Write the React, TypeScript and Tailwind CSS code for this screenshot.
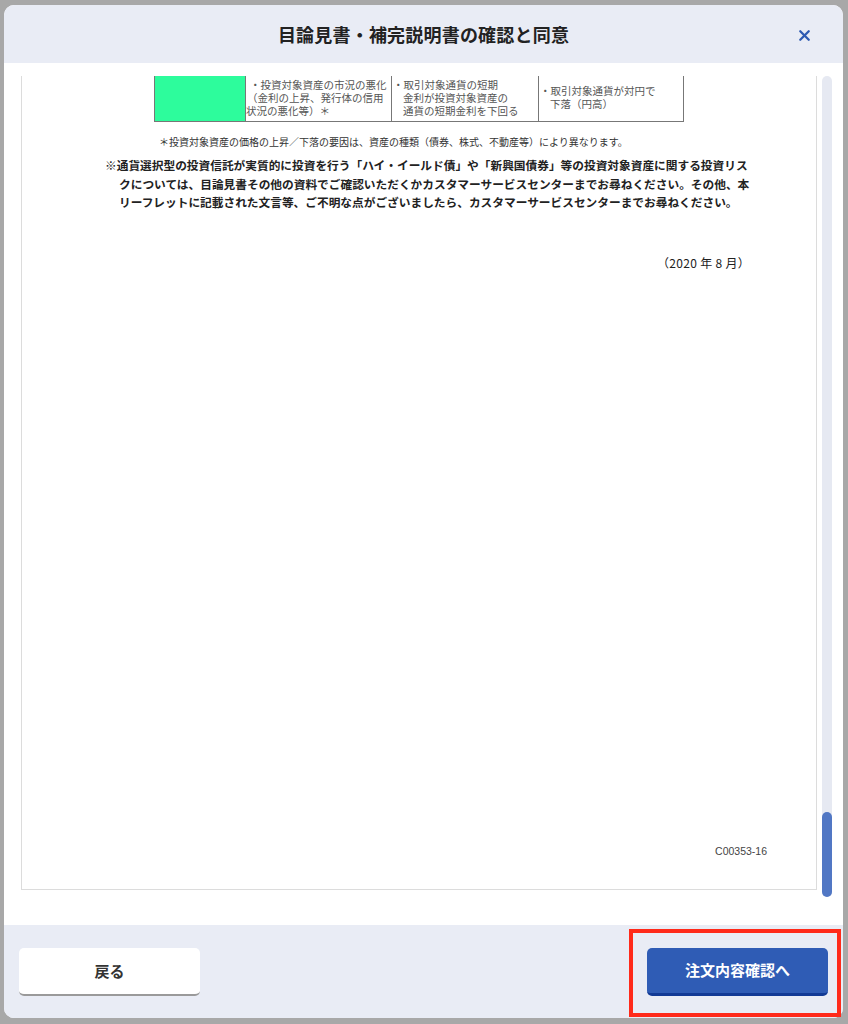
import { X } from "lucide-react";

const jp = { fontFamily: '"Noto Sans CJK JP", "Noto Sans", sans-serif' };

export default function App() {
  return (
    <div
      className="relative w-[848px] h-[1024px] overflow-hidden bg-[#a8a8a8] pt-[5px] pl-[4px]"
      style={jp}
    >
      <div className="flex flex-col w-[839px] h-[1013px] rounded-[10px] overflow-hidden bg-white">
        {/* header */}
        <div className="relative flex items-center justify-center h-[58px] bg-[#e9ecf5] shrink-0">
          <h1 className="text-[18px] font-bold text-[#222] tracking-[0.2px]">
            目論見書・補完説明書の確認と同意
          </h1>
          <button className="absolute right-[30px] top-[22px] text-[#2e5ab2]">
            <X size={17} strokeWidth={3.2} />
          </button>
        </div>

        {/* body */}
        <div className="flex flex-1 pt-[13px] pl-[17px] pr-[11px] pb-[28px] bg-white">
          <div className="flex flex-col w-[797px] h-[814px] border-x border-b border-[#dcdcdc] overflow-hidden">
            {/* table row (cut off above) */}
            <div className="ml-[132px] flex w-[530px] h-[46px] border-x border-b border-[#777] text-[10.5px] leading-[13px] text-[#555]">
              <div className="w-[91px] bg-[#2dfc9c] border-r border-[#777]" />
              <div className="w-[146px] border-r border-[#777] pt-[2px] whitespace-nowrap">
                <div className="pl-[4px]">・投資対象資産の市況の悪化</div>
                <div className="pl-[1px]">（金利の上昇、発行体の信用</div>
                <div>状況の悪化等）＊</div>
              </div>
              <div className="w-[147px] border-r border-[#777] pt-[2px] whitespace-nowrap">
                <div className="pl-[1px]">・取引対象通貨の短期</div>
                <div className="pl-[11px]">金利が投資対象資産の</div>
                <div className="pl-[11px]">通貨の短期金利を下回る</div>
              </div>
              <div className="flex-1 flex flex-col justify-center pb-[4px] whitespace-nowrap">
                <div className="pl-[1px]">・取引対象通貨が対円で</div>
                <div className="pl-[11px]">下落（円高）</div>
              </div>
            </div>

            <p className="ml-[137px] mt-[14px] text-[10px] leading-[12px] text-[#333] whitespace-nowrap">
              ＊投資対象資産の価格の上昇／下落の要因は、資産の種類（債券、株式、不動産等）により異なります。
            </p>

            <div className="ml-[83px] mt-[8px] text-[11.7px] leading-[18.5px] font-bold text-[#222] whitespace-nowrap">
              <div>
                ※通貨選択型の投資信託が実質的に投資を行う「ハイ・イールド債」や「新興国債券」等の投資対象資産に関する投資リス
              </div>
              <div className="pl-[14px]">
                クについては、目論見書その他の資料でご確認いただくかカスタマーサービスセンターまでお尋ねください。その他、本
              </div>
              <div className="pl-[14px]">
                リーフレットに記載された文言等、ご不明な点がございましたら、カスタマーサービスセンターまでお尋ねください。
              </div>
            </div>

            <p className="mt-[43px] pr-[66px] text-right text-[12px] leading-[16px] text-[#222] tracking-[0.3px]">
              （2020 年 8 月）
            </p>

            <div className="flex-1" />
            <p
              className="pr-[49px] pb-[29px] text-right text-[10.5px] text-[#444]"
              style={{ fontFamily: '"Liberation Sans", sans-serif' }}
            >
              C00353-16
            </p>
          </div>

          {/* scrollbar */}
          <div className="ml-[5px] flex flex-col w-[10px] h-[821px] rounded-full bg-[#e6e9f2]">
            <div className="flex-1" />
            <div className="h-[85px] rounded-full bg-[#5177c4]" />
          </div>
        </div>

        {/* footer */}
        <div className="flex items-start justify-between h-[93px] bg-[#e9ecf5] pt-[23px] pl-[15px] pr-[15px] shrink-0">
          <button className="w-[181px] h-[48px] rounded-[5px] bg-white border-b-2 border-[#9a9a9a] text-[15px] font-bold text-[#333]">
            戻る
          </button>
          <button className="w-[181px] h-[48px] rounded-[5px] bg-[#2f5cb5] border-b-[3px] border-[#123a95] text-[15px] font-bold text-white">
            注文内容確認へ
          </button>
        </div>
      </div>

      {/* annotation */}
      <div className="absolute left-[629px] top-[929px] w-[212px] h-[88px] border-[4px] border-[#ff2a1a] pointer-events-none" />
    </div>
  );
}
